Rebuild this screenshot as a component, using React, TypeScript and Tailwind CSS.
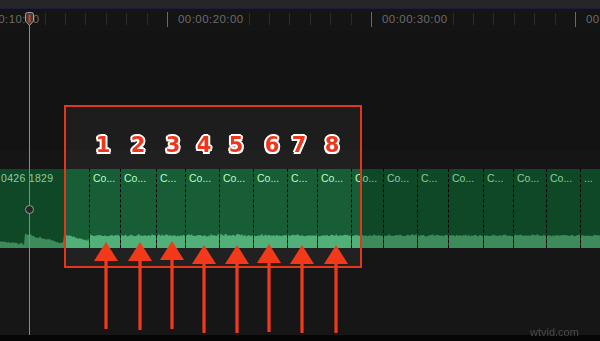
import React from 'react';

// clip boundaries on the storyline (x of each dashed edit line)
const edges = [89, 120, 156, 185, 219, 253, 287, 317, 351, 383, 417, 448, 483, 513, 546, 580, 600];
const shortLabels = [156, 287, 417, 483];

const numbers = [
  { n: '1', x: 103 },
  { n: '2', x: 138 },
  { n: '3', x: 173 },
  { n: '4', x: 204 },
  { n: '5', x: 236 },
  { n: '6', x: 272 },
  { n: '7', x: 299 },
  { n: '8', x: 332 },
];

const arrows = [
  [106, 242, 329],
  [140, 242, 330],
  [172, 241, 329],
  [204, 245, 333],
  [237, 245, 333],
  [269, 244, 332],
  [302, 245, 333],
  [336, 245, 333],
];

const rand = (seed: number) => {
  let s = seed * 9301 + 49297;
  return () => {
    s = (s * 9301 + 49297) % 233280;
    return s / 233280;
  };
};

const wavePath = (w: number, seed: number, top: (x: number) => number) => {
  const r = rand(seed);
  let d = `M0,15 `;
  for (let x = 0; x <= w; x += 1) {
    const spike = r() > 0.85 ? -1.2 : 0;
    d += `L${x},${Math.max(0.3, top(x) + r() * 1.6 + spike).toFixed(1)} `;
  }
  return d + `L${w},15 Z`;
};

const firstTop = (x: number) => {
  if (x < 25) return 7 + (x / 25) * 4;
  if (x < 64) return 0.6 + ((x - 25) / 39) * 9;
  return 1 + ((x - 64) / 25) * 6;
};

const Ruler = () => (
  <div className="h-[21px] shrink-0 overflow-hidden bg-[#141414]">
    <div className="flex h-full ml-[-37px]">
      {['00:00:10:00', '00:00:20:00', '00:00:30:00', '00:00:40:00'].map((label) => (
        <div key={label} className="relative flex h-full w-[204px] shrink-0">
          {Array.from({ length: 10 }).map((_, i) => (
            <div key={i} className="w-[20.4px] shrink-0">
              {i === 0 ? (
                <div className="mt-[3px] h-[15px] border-l border-[#6a6a6a]" />
              ) : (
                <div className="mt-[4px] h-[12px] border-l border-[#2b2b2b]" />
              )}
            </div>
          ))}
          <div className="absolute left-[11px] top-[4px] bg-[#141414] pr-[3px] text-[11.5px] leading-[13px] tracking-[0.45px] text-[#6b6b6b]">
            {label}
          </div>
        </div>
      ))}
    </div>
  </div>
);

const Clip = ({ w, label, seed, first }: { w: number; label: string; seed: number; first?: boolean }) => (
  <div
    className={`flex h-full shrink-0 flex-col bg-[#0e4827] ${first ? '' : 'border-l border-dashed border-black'}`}
    style={{ width: w }}
  >
    <div
      className={`flex-1 overflow-hidden whitespace-nowrap pt-[3px] text-[10.5px] leading-[13px] text-[#8fcb9f] ${
        first ? 'pl-[1px] tracking-[0.3px]' : 'pl-[3px]'
      }`}
    >
      {label}
    </div>
    <svg width={w} height={15} className="block shrink-0">
      <path d={wavePath(w, seed, first ? firstTop : () => 1.8)} fill="#3d8a5b" />
    </svg>
  </div>
);

const ClipTrack = () => (
  <div className="flex h-[79px] shrink-0 overflow-hidden">
    <Clip w={89} label="0426 1829" seed={3} first />
    {edges.slice(0, -1).map((x, i) => (
      <Clip
        key={x}
        w={edges[i + 1] - x}
        seed={i + 11}
        label={x === 580 ? '...' : shortLabels.includes(x) ? 'C...' : 'Co...'}
      />
    ))}
  </div>
);

export default function App() {
  return (
    <div className="relative flex h-[341px] w-[600px] flex-col overflow-hidden bg-[#131313] font-['Liberation_Sans',Arial,sans-serif]">
      <div className="h-[9px] shrink-0 border-b border-[#1c1e3e] bg-[#262626]" />
      <Ruler />
      <div className="h-[120px] shrink-0" />
      <div className="h-[19px] shrink-0 bg-[#151515]" />
      <ClipTrack />
      <div className="h-[87px] shrink-0 bg-[#161616]" />
      <div className="h-[6px] shrink-0 bg-[#060606]" />

      {/* playhead */}
      <div className="absolute left-[29px] top-[24px] h-[311px] w-px bg-[#8a8a8a]" />
      <svg className="absolute left-[24px] top-[12px]" width={11} height={15}>
        <path d="M1.5,2.5 Q1.5,0.5 3.5,0.5 L7.5,0.5 Q9.5,0.5 9.5,2.5 L9.5,9 L5.5,13.5 L1.5,9 Z" fill="#3c3c3c" stroke="#a0a0a0" strokeWidth="1" />
        <rect x="4.5" y="2.5" width="2" height="8" fill="#d2432a" />
      </svg>
      <div className="absolute left-[25px] top-[205px] h-[9px] w-[9px] rounded-full border border-[#9a9a9a] bg-[#262626]" />

      {/* annotation box */}
      <div className="absolute left-[64px] top-[105px] h-[163px] w-[298px] border-2 border-[#e0381c] bg-white/[0.024] backdrop-brightness-[1.27]" />

      {numbers.map(({ n, x }) => (
        <div
          key={n}
          className="absolute top-[133px] -translate-x-1/2 font-['DejaVu_Sans',sans-serif] text-[21px] font-bold leading-[24px] text-[#f0361a] [text-shadow:2px_0_#fff,-2px_0_#fff,0_2px_#fff,0_-2px_#fff,1.5px_1.5px_#fff,-1.5px_1.5px_#fff,1.5px_-1.5px_#fff,-1.5px_-1.5px_#fff]"
          style={{ left: x }}
        >
          {n}
        </div>
      ))}

      <svg className="pointer-events-none absolute left-0 top-0" width={600} height={341}>
        {arrows.map(([cx, ty, by]) => (
          <g key={cx} fill="#f23a1b">
            <polygon points={`${cx},${ty} ${cx - 12},${ty + 19} ${cx + 12},${ty + 19}`} />
            <rect x={cx - 1.6} y={ty + 17} width={3.2} height={by - ty - 17} />
          </g>
        ))}
      </svg>

      <div className="absolute left-[530px] top-[326px] text-[11px] leading-[12px] text-[#4a4a4a]">wtvid.com</div>
    </div>
  );
}
